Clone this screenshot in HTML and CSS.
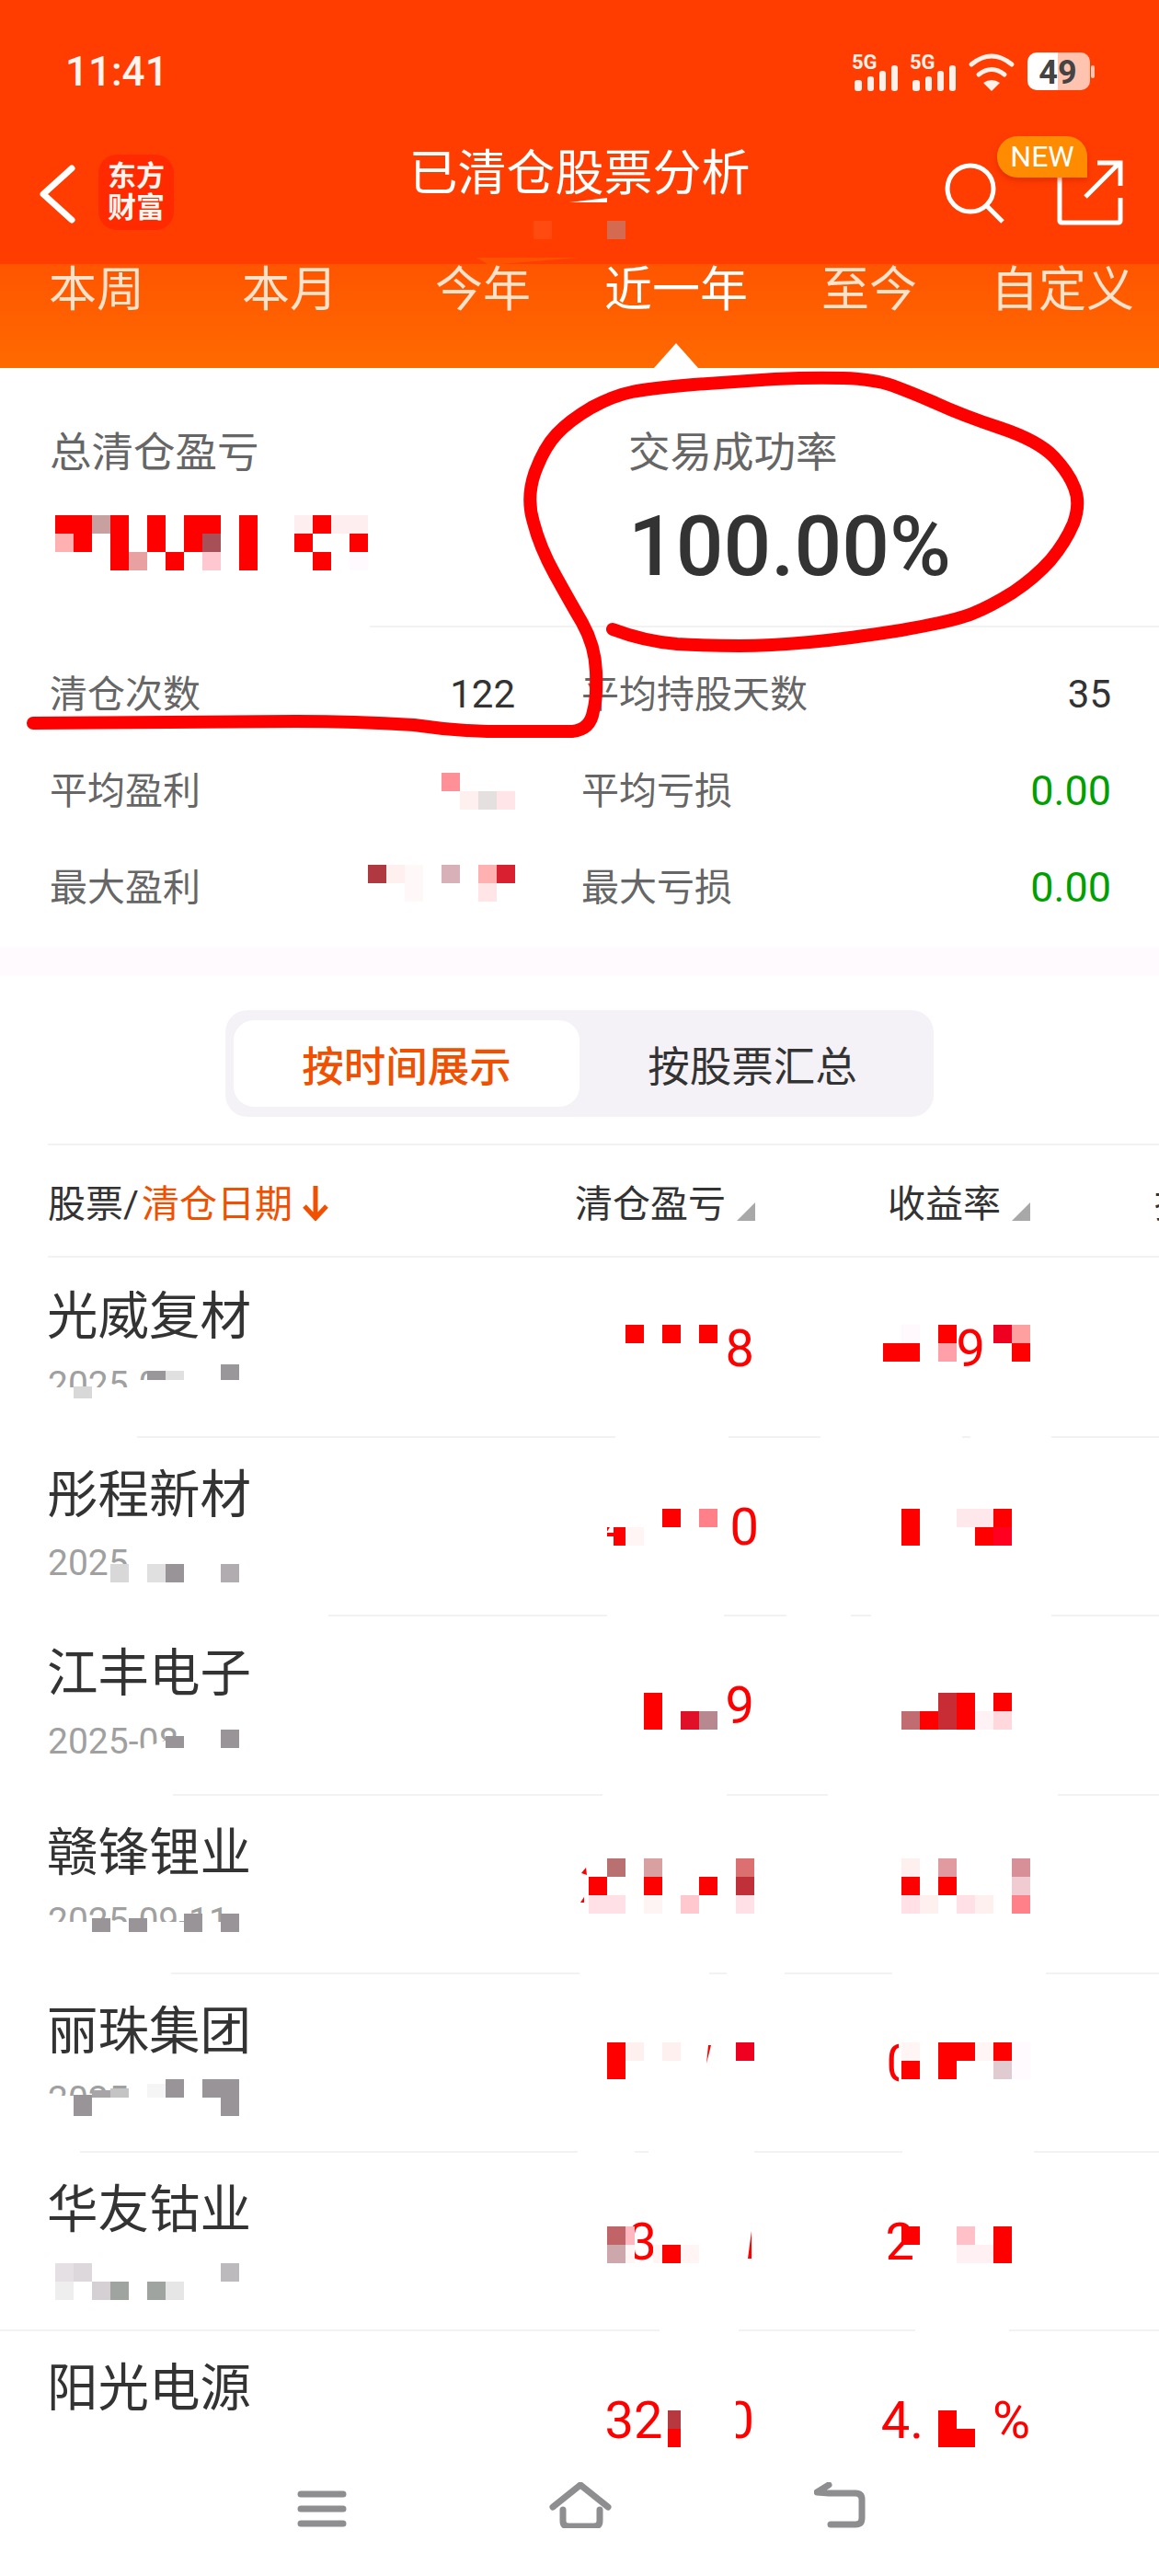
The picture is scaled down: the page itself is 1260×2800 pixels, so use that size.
FILE: index.html
```html
<!DOCTYPE html>
<html lang="zh-CN">
<head>
    <meta charset="UTF-8">
    <meta name="viewport" content="width=device-width, initial-scale=1.0">
    <title>已清仓股票分析</title>
    <link rel="stylesheet" href="styles.css">
</head>
<body>
    <header class="top">
        <div class="statusbar">
            <span class="clock">11:41</span>
            <svg class="status-icons" width="267" height="57" viewBox="923 45 267 57">
                <g fill="#fff0ea">
                    <text class="net" x="926" y="75">5G</text>
                    <rect x="929" y="87" width="8" height="12" rx="3"/><rect x="943" y="83" width="7" height="16" rx="3"/><rect x="956" y="77" width="7" height="22" rx="3"/><rect x="969" y="71" width="7" height="28" rx="3"/>
                    <text class="net" x="989" y="75">5G</text>
                    <rect x="992" y="87" width="8" height="12" rx="3"/><rect x="1006" y="83" width="7" height="16" rx="3"/><rect x="1019" y="77" width="7" height="22" rx="3"/><rect x="1032" y="71" width="7" height="28" rx="3"/>
                    <path d="M1078 99l-9-9q9-6 18 0z"/>
                </g>
                <g fill="none" stroke="#fff0ea" stroke-width="5" stroke-linecap="round">
                    <path d="M1056 70q22-18 44 0"/>
                    <path d="M1064 81q14-11 28 0"/>
                </g>
                <path d="M1127 57h23v41h-23a10 10 0 0 1-10-10v-21a10 10 0 0 1 10-10z" fill="#fff"/>
                <path d="M1150 57h25a10 10 0 0 1 10 10v21a10 10 0 0 1-10 10h-25z" fill="#ffc4b0"/>
                <rect x="1186" y="71" width="4" height="14" rx="2" fill="#ffc4b0"/>
                <text class="batt" x="1150" y="91">49</text>
            </svg>
        </div>
        <nav class="navbar">
            <div class="nav-left">
                <svg width="40" height="64" viewBox="0 0 40 64"><path d="M35 4L4 32l31 28" fill="none" stroke="#fff" stroke-width="7" stroke-linecap="round" stroke-linejoin="round"/></svg>
                <div class="logo">东方<br>财富</div>
            </div>
            <h1 class="title">已清仓股票分析</h1>
            <div class="nav-right">
                <svg width="196" height="100" viewBox="1026 146 196 100">
                    <circle cx="1055" cy="205" r="25" fill="none" stroke="#fff" stroke-width="5"/>
                    <path d="M1073 224l17 17M1152 190v50a2 2 0 0 0 2 2h62a2 2 0 0 0 2-2v-25M1180 214l37-37M1193 177h25v25" fill="none" stroke="#fff" stroke-width="5"/>
                </svg>
                <span class="badge">NEW</span>
            </div>
        </nav>
    </header>

    <div class="tabs">
        <span class="tab">本周</span>
        <span class="tab">本月</span>
        <span class="tab">今年</span>
        <span class="tab on">近一年</span>
        <span class="tab">至今</span>
        <span class="tab">自定义</span>
    </div>

    <section class="stats">
        <div class="summary">
            <div class="sum-cell">
                <div class="sum-label">总清仓盈亏</div>
            </div>
            <div class="sum-cell">
                <div class="sum-label">交易成功率</div>
                <div class="sum-value">100.00%</div>
            </div>
        </div>
        <div class="details">
            <div class="detail"><span class="d-label">清仓次数</span><span class="d-value">122</span></div>
            <div class="detail"><span class="d-label">平均持股天数</span><span class="d-value">35</span></div>
            <div class="detail"><span class="d-label">平均盈利</span><span class="d-value"></span></div>
            <div class="detail"><span class="d-label">平均亏损</span><span class="d-value green">0.00</span></div>
            <div class="detail"><span class="d-label">最大盈利</span><span class="d-value"></span></div>
            <div class="detail"><span class="d-label">最大亏损</span><span class="d-value green">0.00</span></div>
        </div>
    </section>

    <div class="segment">
        <button class="seg-btn active">按时间展示</button>
        <button class="seg-btn">按股票汇总</button>
    </div>

    <div class="thead">
        <div>股票/<span class="orange">清仓日期</span><svg class="sort-arrow" width="30" height="40" viewBox="0 0 30 40"><path d="M15 2v34M3 24l12 13 12-13" fill="none" stroke="#f05000" stroke-width="5"/></svg></div>
        <div>清仓盈亏<svg class="sort-tri" width="20" height="20" viewBox="0 0 20 20"><path d="M20 0v20H0z" fill="#a8a8a8"/></svg></div>
        <div>收益率<svg class="sort-tri" width="20" height="20" viewBox="0 0 20 20"><path d="M20 0v20H0z" fill="#a8a8a8"/></svg></div>
        <div>持</div>
    </div>

    <div class="list">
        <div class="row">
            <div class="stock"><div class="name">光威复材</div><div class="date">2025-0</div></div>
            <div class="val">8</div>
            <div class="val">9<i class="gap49"></i></div>
        </div>
        <div class="row">
            <div class="stock"><div class="name">彤程新材</div><div class="date">2025</div></div>
            <div class="val">4<i class="gap110"></i>0</div>
            <div class="val"></div>
        </div>
        <div class="row">
            <div class="stock"><div class="name">江丰电子</div><div class="date">2025-08</div></div>
            <div class="val">9</div>
            <div class="val"></div>
        </div>
        <div class="row">
            <div class="stock"><div class="name">赣锋锂业</div><div class="date">2025-09-11</div></div>
            <div class="val"></div>
            <div class="val"></div>
        </div>
        <div class="row">
            <div class="stock"><div class="name">丽珠集团</div><div class="date">2025</div></div>
            <div class="val"></div>
            <div class="val">0<i class="gap125"></i></div>
        </div>
        <div class="row">
            <div class="stock"><div class="name">华友钴业</div></div>
            <div class="val">3<i class="gap106"></i></div>
            <div class="val">2<i class="gap126"></i></div>
        </div>
        <div class="row">
            <div class="stock"><div class="name">阳光电源</div></div>
            <div class="val">32<i class="gap68"></i>0</div>
            <div class="val">4.<i class="gap75"></i>%</div>
        </div>
    </div>

    <footer class="sysnav">
        <svg width="54" height="42" viewBox="0 0 54 42"><path d="M4 5h46M4 21h46M4 37h46" stroke="#8e8e90" stroke-width="7" stroke-linecap="round"/></svg>
        <svg width="68" height="50" viewBox="596 698 68 50"><path d="M600 725l30-24 30 24M611 728v12q0 6 6 6h28q6 0 6-6v-12" fill="none" stroke="#8e8e90" stroke-width="7" stroke-linecap="round" stroke-linejoin="round"/></svg>
        <svg width="56" height="50" viewBox="882 698 56 50"><path d="M898 701l-13 8 13 1h29q7 0 7 7v20q0 7-7 7h-27" fill="none" stroke="#8e8e90" stroke-width="7" stroke-linecap="round" stroke-linejoin="round"/></svg>
    </footer>

    <!-- hand redaction and pen marks that lie over the screenshot -->
    <svg class="marks" width="1260" height="2800" viewBox="0 0 1260 2800">
        <!-- white smears over lines and dates -->
        <g fill="#fff">
            <rect x="0" y="678" width="402" height="6"/>
            <rect x="0" y="1558" width="149" height="6"/><rect x="669" y="1558" width="123" height="6"/><rect x="892" y="1558" width="154" height="6"/><rect x="1055" y="1558" width="88" height="6"/>
            <rect x="0" y="1752" width="357" height="6"/><rect x="660" y="1752" width="127" height="6"/><rect x="855" y="1752" width="70" height="6"/><rect x="947" y="1752" width="196" height="6"/>
            <rect x="0" y="1946" width="188" height="6"/><rect x="655" y="1946" width="135" height="6"/><rect x="900" y="1946" width="250" height="6"/>
            <rect x="0" y="2141" width="186" height="6"/><rect x="630" y="2141" width="141" height="6"/><rect x="790" y="2141" width="63" height="6"/><rect x="970" y="2141" width="167" height="6"/>
            <rect x="0" y="2335" width="87" height="6"/><rect x="628" y="2335" width="62" height="6"/><rect x="705" y="2335" width="115" height="6"/><rect x="981" y="2335" width="143" height="6"/>
            <rect x="717" y="2530" width="86" height="6"/><rect x="995" y="2530" width="102" height="6"/>
            <rect x="40" y="1508" width="260" height="30"/><rect x="140" y="1500" width="160" height="10"/>
            <rect x="200" y="1480" width="40" height="30"/>
            <path d="M120 1912l80-27v30h-80z"/>
            <rect x="40" y="2089" width="240" height="30"/>
            <rect x="40" y="2278" width="240" height="30"/><rect x="150" y="2258" width="130" height="24"/>
            <rect x="640" y="1636" width="20" height="50"/><rect x="660" y="1636" width="20" height="24"/>
            <rect x="977" y="2215" width="24" height="50"/>
            <rect x="790" y="2610" width="10" height="46"/>
        </g>
        <!-- mosaic, summary -->
        <g fill="#f00">
            <rect x="60" y="560" width="40" height="20"/><rect x="120" y="560" width="20" height="60"/><rect x="160" y="560" width="20" height="40"/><rect x="200" y="560" width="40" height="20"/><rect x="260" y="560" width="20" height="60"/><rect x="340" y="560" width="20" height="20"/>
            <rect x="80" y="580" width="20" height="20"/><rect x="200" y="580" width="20" height="20"/><rect x="320" y="580" width="20" height="20"/><rect x="380" y="580" width="20" height="20"/>
            <rect x="180" y="600" width="20" height="20"/><rect x="340" y="600" width="20" height="20"/>
            <rect x="680" y="1440" width="20" height="20"/><rect x="720" y="1440" width="20" height="20"/><rect x="760" y="1440" width="20" height="20"/>
            <rect x="1020" y="1440" width="20" height="20"/><rect x="960" y="1460" width="40" height="20"/><rect x="1100" y="1460" width="20" height="20"/>
            <rect x="720" y="1640" width="20" height="20"/><rect x="667" y="1660" width="13" height="20"/>
            <rect x="980" y="1640" width="20" height="40"/><rect x="1080" y="1640" width="20" height="20"/><rect x="1060" y="1660" width="20" height="20"/>
            <rect x="700" y="1840" width="20" height="40"/><rect x="1040" y="1840" width="20" height="40"/><rect x="1000" y="1860" width="20" height="20"/><rect x="1080" y="1840" width="20" height="20"/>
            <rect x="640" y="2040" width="20" height="20"/><rect x="700" y="2040" width="20" height="20"/><rect x="760" y="2040" width="20" height="20"/>
            <rect x="980" y="2040" width="20" height="20"/><rect x="1020" y="2040" width="20" height="20"/>
            <rect x="660" y="2220" width="20" height="40"/>
            <rect x="980" y="2240" width="20" height="20"/><rect x="1020" y="2220" width="20" height="40"/><rect x="1040" y="2220" width="20" height="20"/><rect x="1080" y="2220" width="20" height="20"/>
            <rect x="720" y="2440" width="20" height="20"/><rect x="1080" y="2420" width="20" height="40"/><rect x="980" y="2420" width="20" height="20"/>
            <rect x="726" y="2640" width="14" height="20"/>
            <rect x="1020" y="2620" width="20" height="40"/><rect x="1040" y="2640" width="20" height="20"/>
            <path d="M632 2036l5-6 1 8zM631 2068l4-6v6zM768 2243l2-20h3zM813 2455l4-30v30zM800 2080l5-15v15zM710 2080l1-15 2 15z"/>
        </g>
        <rect x="100" y="560" width="20" height="20" fill="#c8a0a0"/>
        <rect x="320" y="560" width="20" height="20" fill="#ffeef0"/>
        <rect x="360" y="560" width="40" height="20" fill="#ffeef0"/>
        <rect x="60" y="580" width="20" height="20" fill="#ffb0b0"/>
        <rect x="220" y="580" width="20" height="20" fill="#a85058"/>
        <rect x="140" y="600" width="20" height="20" fill="#e8a0a0"/>
        <rect x="220" y="600" width="20" height="20" fill="#ffc8d0"/>
        <rect x="380" y="600" width="20" height="20" fill="#fffafd"/>
        <rect x="480" y="840" width="20" height="20" fill="#ff9098"/>
        <rect x="500" y="860" width="20" height="20" fill="#fff0f0"/>
        <rect x="520" y="860" width="20" height="20" fill="#e4e0e0"/>
        <rect x="540" y="860" width="20" height="20" fill="#ffe4e8"/>
        <rect x="400" y="940" width="20" height="20" fill="#b03840"/>
        <rect x="420" y="940" width="20" height="20" fill="#fff0f0"/>
        <rect x="440" y="940" width="20" height="40" fill="#fff8f8"/>
        <rect x="480" y="940" width="20" height="20" fill="#d8b0b8"/>
        <rect x="520" y="940" width="20" height="20" fill="#ffb0b0"/>
        <rect x="540" y="940" width="20" height="20" fill="#d82030"/>
        <rect x="520" y="960" width="20" height="20" fill="#ffe4e8"/>
        <!-- mosaic, rows -->
        <rect x="980" y="1440" width="20" height="20" fill="#fff8fd"/>
        <rect x="1080" y="1440" width="20" height="20" fill="#f00020"/>
        <rect x="1100" y="1440" width="20" height="20" fill="#ffa0a0"/>
        <rect x="1020" y="1460" width="20" height="20" fill="#ffa0a8"/>
        <rect x="760" y="1640" width="20" height="20" fill="#ff8088"/>
        <rect x="680" y="1660" width="20" height="20" fill="#fff5f5"/>
        <rect x="1040" y="1640" width="40" height="20" fill="#ffe8ec"/>
        <rect x="1080" y="1660" width="20" height="20" fill="#ff0020"/>
        <rect x="740" y="1860" width="20" height="20" fill="#e01028"/>
        <rect x="760" y="1860" width="20" height="20" fill="#b88890"/>
        <rect x="980" y="1860" width="20" height="20" fill="#c06c70"/>
        <rect x="1020" y="1840" width="20" height="40" fill="#c82c34"/>
        <rect x="1060" y="1860" width="20" height="20" fill="#fff2f4"/>
        <rect x="1080" y="1860" width="20" height="20" fill="#ffd8de"/>
        <rect x="660" y="2020" width="20" height="20" fill="#b87070"/>
        <rect x="700" y="2020" width="20" height="20" fill="#d8a0a0"/>
        <rect x="800" y="2020" width="20" height="20" fill="#dc7070"/>
        <rect x="800" y="2040" width="20" height="20" fill="#c03038"/>
        <rect x="640" y="2060" width="40" height="20" fill="#ffe0e6"/>
        <rect x="700" y="2060" width="20" height="20" fill="#fff4f4"/>
        <rect x="740" y="2060" width="20" height="20" fill="#ffc8ce"/>
        <rect x="800" y="2060" width="20" height="20" fill="#ffe0e6"/>
        <rect x="980" y="2020" width="20" height="20" fill="#fff0f0"/>
        <rect x="1020" y="2020" width="20" height="20" fill="#e09aa0"/>
        <rect x="1100" y="2020" width="20" height="20" fill="#d89098"/>
        <rect x="1100" y="2040" width="20" height="20" fill="#f0ccd2"/>
        <rect x="980" y="2060" width="20" height="20" fill="#ffe0e6"/>
        <rect x="1000" y="2060" width="20" height="20" fill="#fff0f0"/>
        <rect x="1040" y="2060" width="20" height="20" fill="#ffe0e6"/>
        <rect x="1060" y="2060" width="20" height="20" fill="#fff0f0"/>
        <rect x="1100" y="2060" width="20" height="20" fill="#ff8088"/>
        <rect x="680" y="2220" width="20" height="20" fill="#fff0f0"/>
        <rect x="720" y="2220" width="20" height="20" fill="#fff0f0"/>
        <rect x="800" y="2220" width="20" height="20" fill="#f00020"/>
        <rect x="980" y="2220" width="20" height="20" fill="#fff5f5"/>
        <rect x="1060" y="2220" width="20" height="20" fill="#fff5f5"/>
        <rect x="1080" y="2240" width="20" height="20" fill="#e0ccd0"/>
        <rect x="1100" y="2220" width="20" height="40" fill="#fffafd"/>
        <rect x="660" y="2420" width="20" height="20" fill="#c06468"/>
        <rect x="680" y="2420" width="10" height="20" fill="#ffb8c0"/>
        <rect x="660" y="2440" width="20" height="20" fill="#cca8ac"/>
        <rect x="680" y="2440" width="10" height="20" fill="#fff5f5"/>
        <rect x="710" y="2440" width="10" height="20" fill="#fff5f5"/>
        <rect x="740" y="2440" width="20" height="20" fill="#fff5f5"/>
        <rect x="1040" y="2420" width="20" height="20" fill="#ffc0c8"/>
        <rect x="1040" y="2440" width="40" height="20" fill="#fff0f4"/>
        <rect x="726" y="2620" width="14" height="20" fill="#b83840"/>
        <!-- mosaic, dates -->
        <rect x="160" y="1490" width="20" height="10" fill="#9a979a"/>
        <rect x="180" y="1490" width="20" height="10" fill="#e0e0e0"/>
        <rect x="240" y="1483" width="20" height="17" fill="#9a979a"/>
        <rect x="80" y="1507" width="20" height="13" fill="#d8d8d8"/>
        <rect x="120" y="1700" width="20" height="20" fill="#d8d8d8"/>
        <rect x="160" y="1700" width="20" height="20" fill="#e0e0e0"/>
        <rect x="180" y="1700" width="20" height="20" fill="#989498"/>
        <rect x="240" y="1700" width="20" height="20" fill="#b0acb0"/>
        <rect x="180" y="1887" width="20" height="13" fill="#989498"/>
        <rect x="240" y="1880" width="20" height="20" fill="#989498"/>
        <rect x="100" y="2085" width="20" height="15" fill="#989498"/>
        <rect x="140" y="2085" width="20" height="15" fill="#989498"/>
        <rect x="200" y="2080" width="20" height="20" fill="#989498"/>
        <rect x="240" y="2080" width="20" height="20" fill="#989498"/>
        <rect x="80" y="2277" width="20" height="23" fill="#989498"/>
        <rect x="100" y="2272" width="20" height="8" fill="#a8a4a8"/>
        <rect x="120" y="2270" width="20" height="10" fill="#c4c4c4"/>
        <rect x="160" y="2265" width="20" height="15" fill="#f5f5f5"/>
        <rect x="180" y="2260" width="20" height="20" fill="#989498"/>
        <rect x="220" y="2260" width="40" height="20" fill="#989498"/>
        <rect x="240" y="2280" width="20" height="20" fill="#989498"/>
        <rect x="60" y="2460" width="20" height="20" fill="#e4e0e4"/>
        <rect x="80" y="2460" width="20" height="20" fill="#dcd8dc"/>
        <rect x="240" y="2460" width="20" height="20" fill="#bcbabc"/>
        <rect x="60" y="2480" width="20" height="20" fill="#eeeeee"/>
        <rect x="100" y="2480" width="20" height="20" fill="#d4d0d4"/>
        <rect x="120" y="2480" width="20" height="20" fill="#a0a4a0"/>
        <rect x="160" y="2480" width="20" height="20" fill="#a0a4a0"/>
        <rect x="180" y="2480" width="20" height="20" fill="#e6e6e6"/>
        <!-- smudges in the header -->
        <path d="M619 220l41-5v5z" fill="#fff"/>
        <rect x="580" y="240" width="20" height="20" fill="#ff4a10"/>
        <rect x="660" y="240" width="20" height="20" fill="#d46a50"/>
        <path d="M518 280h113l-86 7h-15z" fill="#ff5200"/>
        <!-- red pen -->
        <path class="pen" d="M666 684Q700 697 736 700Q772 702 804 702Q836 702 880 698Q924 694 980 685Q1037 675 1057 667Q1077 659 1101 644Q1125 628 1142 609Q1158 590 1167 569Q1175 547 1168 530Q1162 514 1146 497Q1129 479 1087 465Q1045 451 1017 438Q989 426 970 419Q950 412 917 411Q884 410 842 412Q800 415 754 418Q707 422 687 426Q667 430 643 443Q619 457 605 472Q591 487 581 515Q572 542 580 568Q587 595 603 624Q619 653 633 677Q647 702 648 730Q649 760 645 773Q642 793 622 795L530 795Q490 794 450 788Q386 784 322 784L36 786"/>
    </svg>
</body>
</html>
```

FILE: styles.css
```css
* { box-sizing: border-box; }
html, body { margin: 0; padding: 0; }
body { position: relative; width: 1260px; height: 2800px; overflow: hidden; background: #fff; color: #333; font-family: Roboto, "Noto Sans CJK SC", sans-serif; }

.top { height: 287px; background: #ff3d00; color: #fff; }
.statusbar { display: flex; justify-content: space-between; align-items: flex-start; height: 130px; padding: 45px 70px 0 71px; }
.clock { margin-top: 4px; font-size: 44px; font-weight: 500; line-height: 58px; color: #fff5ef; }
.status-icons { display: block; }
.net { font: 700 22px Roboto, sans-serif; }
.batt { font: 700 36px Roboto, sans-serif; fill: #444; text-anchor: middle; }

.navbar { display: grid; grid-template-columns: 1fr auto 1fr; height: 157px; }
.nav-left { display: flex; align-items: flex-start; gap: 24px; padding: 48px 0 0 43px; }
.nav-left svg { margin-top: 1px; }
.logo { width: 82px; height: 82px; margin-top: -10px; padding-top: 7px; background: #ff2a00; border-radius: 20px; font-size: 31px; font-weight: 700; line-height: 34px; text-align: center; color: #fff5f0; }
.title { margin: 0; padding-top: 23px; font-size: 53px; font-weight: 400; line-height: 72px; color: #fff; }
.nav-right { position: relative; display: flex; justify-content: flex-end; padding: 16px 38px 0 0; }
.nav-right svg { display: block; }
.badge { position: absolute; top: 18px; right: 78px; width: 98px; height: 45px; background: #ff8c00; border-radius: 22px 22px 0 22px; box-shadow: 0 3px 6px rgba(200, 30, 0, .5); font-size: 32px; line-height: 45px; text-align: center; color: #fff; }

.tabs { position: relative; display: grid; grid-template-columns: repeat(6, 210px); height: 113px; background: linear-gradient(#ff5500, #ff6a00); }
.tab { position: relative; height: 113px; font-size: 52px; line-height: 58px; text-align: center; color: #ffe2cc; }
.tab.on { color: #fff; }
.tab.on::after { content: ""; position: absolute; left: 81px; bottom: 0; border-left: 24px solid transparent; border-right: 24px solid transparent; border-bottom: 27px solid #fff; }

.stats { height: 660px; background: linear-gradient(#fff 630px, #fefafd 630px); }
.summary { display: grid; grid-template-columns: 629px 1fr; height: 282px; padding: 65px 0 0 54px; border-bottom: 2px solid #f2f2f2; }
.sum-label { font-size: 45.5px; line-height: 56px; color: #666; }
.sum-value { margin-top: 23px; font-size: 91px; font-weight: 500; line-height: 100px; color: #333; }
.details { display: grid; grid-template-columns: 506px 576px; column-gap: 72px; padding: 38px 0 0 54px; }
.detail { display: flex; justify-content: space-between; height: 105px; line-height: 70px; }
.d-label { font-size: 41px; color: #666; }
.d-value { font-size: 42px; color: #333; }
.d-value.green { font-size: 45px; color: #00a000; }

.segment { display: flex; width: 770px; height: 116px; margin: 38px 0 0 245px; padding: 11px 9px; background: #f5f2f7; border-radius: 24px; }
.seg-btn { flex: 1; padding: 0; border: none; border-radius: 22px; background: none; font: 400 45.5px Roboto, "Noto Sans CJK SC", sans-serif; color: #333; }
.seg-btn.active { background: #fff; font-weight: 500; color: #f05000; }

.thead { display: grid; grid-template-columns: 573px 340px 290px 1fr; align-items: center; height: 124px; margin: 29px 0 0 52px; border-top: 2px solid #f2f2f2; border-bottom: 2px solid #f2f2f2; font-size: 41px; white-space: nowrap; overflow: hidden; }
.orange { margin-left: 3px; color: #f05000; }
.sort-arrow { margin-left: 10px; vertical-align: -4px; }
.sort-tri { margin-left: 12px; vertical-align: -4px; }

.row { display: grid; grid-template-columns: 601px 168px 300px; height: 194.2px; border-top: 2px solid #f2f2f2; padding-left: 51px; }
.row:first-child { border-top-color: transparent; }
.name { padding-top: 28px; font-size: 55.5px; line-height: 70px; color: #333; }
.date { margin-top: 15px; padding-left: 1px; font-size: 39px; line-height: 46px; color: #a0a0a0; }
.val { padding-top: 67px; font-size: 56px; line-height: 60px; text-align: right; color: #f00; white-space: nowrap; }
.val i { display: inline-block; }
.gap49 { width: 49px; }
.gap68 { width: 68px; }
.gap75 { width: 75px; }
.gap106 { width: 106px; }
.gap110 { width: 110px; }
.gap125 { width: 125px; }
.gap126 { width: 126px; }

.sysnav { position: absolute; left: 0; right: 0; top: 2698px; display: flex; align-items: flex-end; height: 50px; padding-left: 323px; gap: 220px; }
.marks { position: absolute; top: 0; left: 0; pointer-events: none; }
.pen { fill: none; stroke: #f00; stroke-width: 14; stroke-linecap: round; stroke-linejoin: round; }
```
